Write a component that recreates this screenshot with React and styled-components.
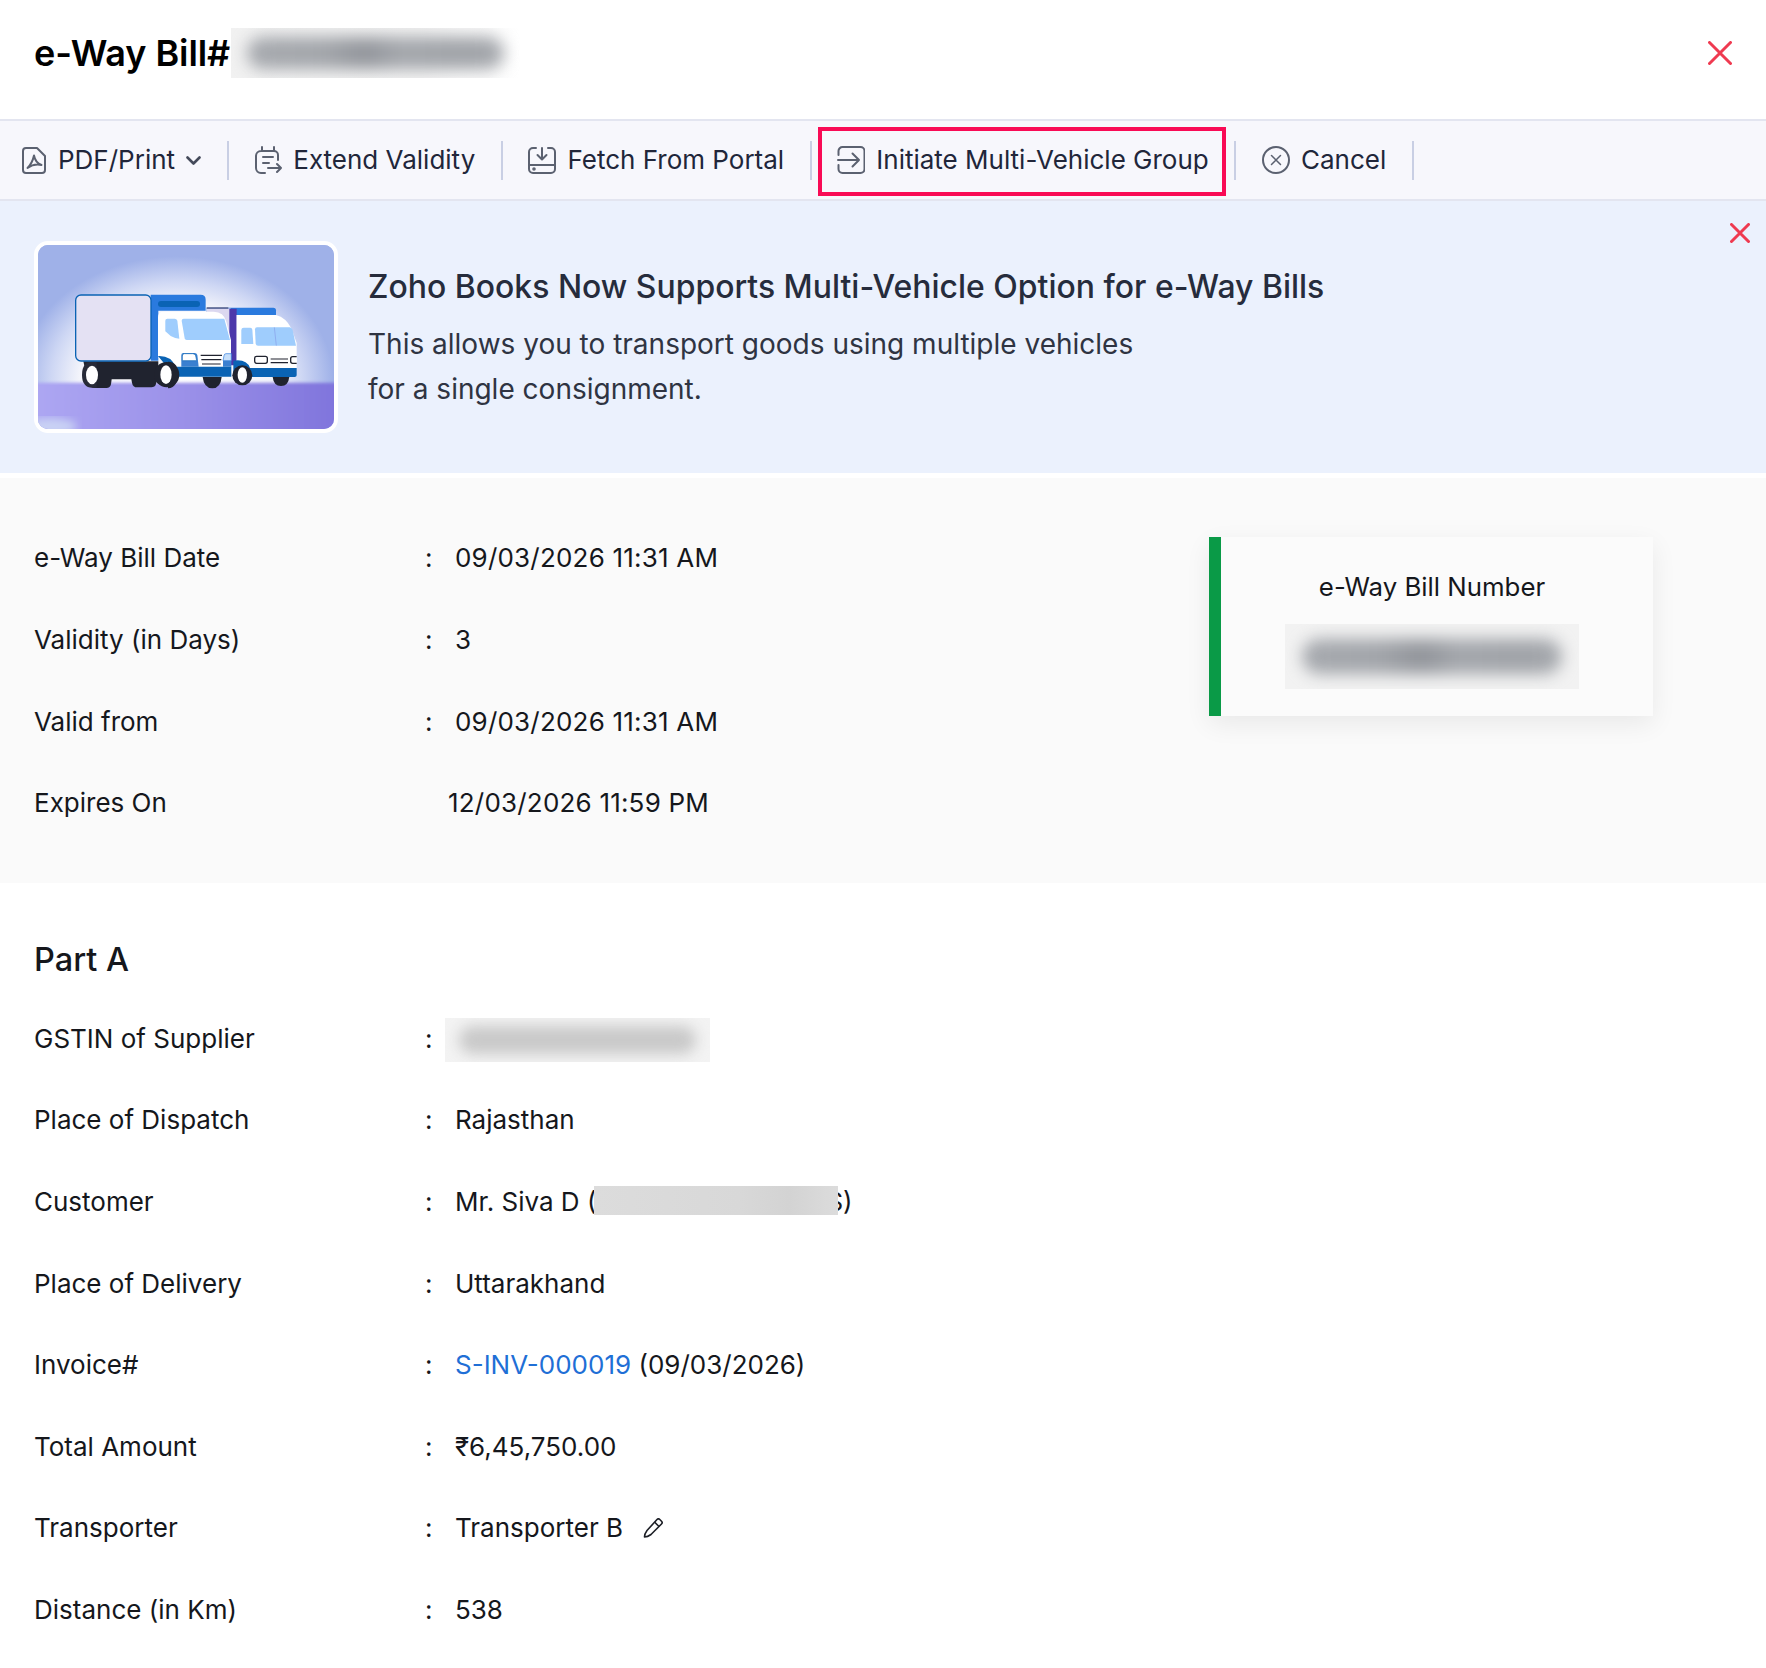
import React from "react";
import styled, { createGlobalStyle } from "styled-components";

const Global = createGlobalStyle`
  html, body { margin: 0; padding: 0; background: #fff; }
  body { font-family: Inter, "Liberation Sans", sans-serif; color: #15171c; }
  * { box-sizing: border-box; }
`;

const Page = styled.div`
  width: 1766px;
  height: 1668px;
  overflow: hidden;
  background: #fff;
`;

const Header = styled.header`
  height: 119px;
  display: flex;
  align-items: center;
  padding: 0 34px 13px;
`;
const Title = styled.h1`
  margin: 0;
  font-size: 36px;
  font-weight: 600;
  color: #000;
  letter-spacing: -0.08px;
`;

const Redaction = styled.span`
  display: inline-flex;
  align-items: center;
  justify-content: center;
  width: ${(p) => p.$w}px;
  height: ${(p) => p.$h}px;
  margin-top: ${(p) => p.$mt || 0}px;
  margin-left: ${(p) => p.$ml || 0}px;
  overflow: hidden;
  background: ${(p) => p.$bg || "#f5f5f5"};
  flex: none;
  &::before {
    content: "";
    width: calc(100% - ${(p) => p.$ix * 2}px);
    height: calc(100% - ${(p) => p.$iy * 2}px);
    border-radius: 18px;
    background: ${(p) => p.$blob};
    filter: blur(${(p) => p.$blur}px);
  }
`;

const CloseBtn = styled.button`
  border: 0;
  padding: 0;
  background: none;
  display: flex;
  margin-left: auto;
  margin-right: ${(p) => p.$mr}px;
  margin-top: ${(p) => p.$mt || 0}px;
`;

const Toolbar = styled.nav`
  height: 82px;
  background: #f7f7fc;
  border-top: 2px solid #e3e5f0;
  border-bottom: 2px solid #e3e5f0;
  display: flex;
  align-items: center;
  padding-left: 22px;
`;
const ToolItem = styled.div`
  position: relative;
  display: flex;
  align-items: center;
  height: 39px;
  gap: 11px;
  padding: 0 25.6px 0 ${(p) => (p.$first ? 0 : 25.6)}px;
  border-right: 2px solid #c9cfe4;
  font-size: 26px;
  line-height: 36px;
  color: #21263a;
  white-space: nowrap;
`;
const ToolLabel = styled.span`
  margin-left: ${(p) => (p.$pdf ? 1 : 0)}px;
`;
const Highlight = styled.span`
  position: absolute;
  left: 6px;
  right: 8px;
  top: -14px;
  bottom: -16px;
  border: 4px solid #f90a55;
`;

const Banner = styled.section`
  height: 272px;
  background: #ebf1fd;
  display: flex;
  align-items: flex-start;
  padding: 40px 0 0 34px;
`;
const Art = styled.div`
  width: 304px;
  height: 192px;
  flex: none;
  border: 4px solid #fff;
  border-radius: 14px;
  overflow: hidden;
  display: flex;
`;
const BannerText = styled.div`
  margin-left: 30px;
  padding-top: 25px;
`;
const BannerTitle = styled.h2`
  margin: 0 0 14px;
  font-size: 31.95px;
  line-height: 42px;
  font-weight: 500;
  color: #262c3c;
`;
const BannerBody = styled.p`
  margin: 0;
  font-size: 28px;
  line-height: 45px;
  color: #2f3442;
`;

const Details = styled.section`
  margin-top: 5px;
  height: 405px;
  background: #fafafa;
  padding: 39px 113px 0 34px;
  display: flex;
  justify-content: space-between;
  align-items: flex-start;
`;
const Rows = styled.div`
  display: flex;
  flex-direction: column;
`;
const Row = styled.div`
  display: flex;
  align-items: center;
  height: 81.65px;
  font-size: 26px;
  color: #15171c;
`;
const Label = styled.div`
  width: 391px;
  flex: none;
`;
const Colon = styled.div`
  width: 30px;
  flex: none;
`;
const Value = styled.div`
  display: flex;
  align-items: center;
  white-space: pre;
  letter-spacing: ${(p) => (p.$date ? "0.2px" : "0")};
`;
const ExpiryValue = styled(Value)`
  margin-left: 23px;
`;

const NumberCard = styled.aside`
  margin-top: 20px;
  width: 444px;
  height: 179px;
  background: #fbfbfb;
  border-left: 12px solid #0a9a47;
  box-shadow: 0 8px 24px rgba(0, 0, 0, 0.07);
  display: flex;
  flex-direction: column;
  align-items: center;
  padding: 33px 10px 0 0;
`;
const CardLabel = styled.div`
  font-size: 25.8px;
  line-height: 34px;
  color: #15171c;
  margin-bottom: 20px;
`;

const PartA = styled.section`
  padding: 50.3px 34px 0;
`;
const PartTitle = styled.h3`
  margin: 0 0 10px;
  font-size: 32.5px;
  line-height: 54px;
  font-weight: 500;
  color: #15171c;
`;
const InvoiceLink = styled.a`
  color: #1f6fd6;
  text-decoration: none;
`;
const InlineRedact = styled.span`
  position: relative;
  display: inline-block;
  width: 244px;
  height: 29px;
  background: linear-gradient(90deg, #dcdcdc, #d8d8d8 60%, #d3d3d3 80%, #dcdcdc);
  margin-left: -2px;
  margin-top: -2px;
`;
const TrailingText = styled.span`
  margin-left: -12px;
`;
const PencilIcon = styled.svg`
  margin-left: 20px;
`;

const stroke = { fill: "none", stroke: "#5b6170", strokeWidth: 2, strokeLinecap: "round", strokeLinejoin: "round" };

const Pdf = () => (
  <svg width="24" height="27" viewBox="0 0 24 27" {...stroke}>
    <path d="M4 1h11l8 8v14a3 3 0 0 1-3 3H4a3 3 0 0 1-3-3V4a3 3 0 0 1 3-3z" />
    <path d="M12 8.500c.8 4.500 3.500 8 7.500 9.500-4.500-1-9.500-.3-14 3 3.500-3.500 5.500-8 6.500-12.500z" />
  </svg>
);
const Extend = () => (
  <svg width="28" height="28" viewBox="0 0 28 28" {...stroke}>
    <path d="M8 1v4M20 1v4M24 14V9a4 4 0 0 0-4-4H7a5 5 0 0 0-5 5v12a5 5 0 0 0 5 5h4" />
    <path d="M9 11h10M9 17h6M14 22h13M23 18l4 4-4 4" />
  </svg>
);
const Fetch = () => (
  <svg width="28" height="28" viewBox="0 0 28 28" {...stroke}>
    <path d="M8 2H5a4 4 0 0 0-4 4v17a4 4 0 0 0 4 4h18a4 4 0 0 0 4-4V6a4 4 0 0 0-4-4h-3" />
    <path d="M14 2v11M9.500 9l4.500 4.500L18.500 9M1 19h26" />
    <circle cx="6" cy="23" r=".8" />
  </svg>
);
const Multi = () => (
  <svg width="28" height="28" viewBox="0 0 28 28" {...stroke}>
    <path d="M1.500 9V5a4 4 0 0 1 4-4h18a4 4 0 0 1 4 4v18a4 4 0 0 1-4 4h-18a4 4 0 0 1-4-4v-4" />
    <path d="M1 14h21M15.500 7.500 22 14l-6.500 6.500" />
  </svg>
);
const CancelIcon = () => (
  <svg width="28" height="28" viewBox="0 0 28 28" {...stroke}>
    <circle cx="14" cy="14" r="13" />
    <path d="m9.500 9.500 9 9M18.500 9.500l-9 9" strokeWidth="1.500" />
  </svg>
);
const X = ({ size, sw }) => (
  <svg width={size} height={size} viewBox={`0 0 ${size} ${size}`} fill="none" stroke="#ef3a50" strokeWidth={sw} strokeLinecap="round">
    <path d={`M1.500 1.500 ${size - 1.5} ${size - 1.5}M${size - 1.5} 1.500 1.500 ${size - 1.5}`} />
  </svg>
);

const TruckArt = () => (
  <svg width="296" height="184" viewBox="54 45 888 552" preserveAspectRatio="none">
    <defs>
      <radialGradient id="glow" gradientUnits="userSpaceOnUse" cx="470" cy="450" r="470" gradientTransform="translate(0 95) scale(1 .79)">
        <stop offset="0" stopColor="#fff" />
        <stop offset=".62" stopColor="#f3f4fb" />
        <stop offset=".8" stopColor="#ced7f4" />
        <stop offset="1" stopColor="#9fb1e8" />
      </radialGradient>
      <linearGradient id="floor" x1="0" x2="1" y1="0" y2="0">
        <stop offset="0" stopColor="#ada7f3" />
        <stop offset=".5" stopColor="#9a90e8" />
        <stop offset="1" stopColor="#7f74dc" />
      </linearGradient>
      <filter id="soft"><feGaussianBlur stdDeviation="12" /></filter>
      <filter id="soft2"><feGaussianBlur stdDeviation="4" /></filter>
    </defs>
    <rect x="54" y="45" width="888" height="552" fill="#9fb1e8" />
    <rect x="54" y="45" width="888" height="420" fill="url(#glow)" />
    <path d="M40 458h920v150H40z" fill="url(#floor)" filter="url(#soft2)" />
    <ellipse cx="90" cy="590" rx="80" ry="26" fill="#c9d2f4" filter="url(#soft)" />

    <path d="M560 233h200q8 0 8 8v14H560z" fill="#2a7ade" />
    <rect x="560" y="235" width="72" height="150" fill="#dcd8f0" />
    <path d="M560 234h65" stroke="#2a2a55" strokeWidth="3" />
    <path d="M628 236h22v170h-22z" fill="#4c38aa" />
    <path d="M650 255h118q30 8 46 40l16 44v76H650z" fill="#fff" />
    <path d="M664 300q0-7 7-7h20q5 0 6 6l3 43h-36z" fill="#9fcdfd" />
    <path d="M705 298q0-6 6-6h98q6 0 9 8l10 47H714q-6 0-7-6z" fill="#9fcdfd" />
    <path d="M763 292l6 55" stroke="#7f8fe0" strokeWidth="1.500" />
    <rect x="704" y="379" width="38" height="21" rx="6" fill="#fff" stroke="#20232f" strokeWidth="4" />
    <path d="M752 387h52M752 398h52" stroke="#20232f" strokeWidth="3.500" />
    <path d="M830 380h-12a6 6 0 0 0-6 6v8a6 6 0 0 0 6 6h12" fill="#fff" stroke="#20232f" strokeWidth="4" />
    <path d="M758 440h50q-3 28-25 28t-25-28z" fill="#20232f" />
    <path d="M640 392q40-6 50 22h140v22q0 5-6 5H640z" fill="#0a63b4" />
    <circle cx="667" cy="436" r="30" fill="#20232f" />
    <ellipse cx="667" cy="435" rx="14" ry="23" fill="#fff" />

    <path d="M392 194h150q15 0 15 15v33H415v150h-23z" fill="#2a7ade" />
    <rect x="414" y="213" width="126" height="18" rx="9" fill="#0a63b4" />
    <path d="M414 262q0-17 17-17h150q30 0 38 30l14 55v85H465q-10-35-51-37z" fill="#fff" />
    <path d="M436 272q0-6 6-6h22q6 0 8 6l6 54q-12 0-26-8l-16-14z" fill="#9fcdfd" />
    <path d="M485 272q0-6 6-6h122l17 64H500q-5 0-6-5z" fill="#9fcdfd" />
    <path d="M548 441h57q-3 34-28 34t-29-34z" fill="#20232f" />
    <path d="M484 375q0-6 6-6h34q6 0 8 6l4 35h-52z" fill="#3a80d0" />
    <path d="M487 378q0-7 6-7h25q7 0 9 6l3 15h-43z" fill="#fff" stroke="#0a63b4" strokeWidth="2" />
    <path d="M542 376h64M544 389h60M546 402h56" stroke="#20232f" strokeWidth="3.500" />
    <path d="M634 371h-16q-5 0-6 6l-3 15h25z" fill="#c7dffa" stroke="#2a7ade" strokeWidth="2" />
    <path d="M609 392h25v18h-25z" fill="#3a80d0" />
    <path d="M414 378q40-2 52 32h168v30H474q-20 0-30-26z" fill="#0a63b4" />

    <path d="M190 394h225v38l-7 30q-3 10-14 10h-42q-14 0-16-14l-2-10h-59l-2 15q-2 11-14 11h-34q-15 0-20-15z" fill="#20232f" />
    <path d="M186 435c0-28 12-40 30-40h14v78h-14c-18 0-30-12-30-38z" fill="#272a38" />
    <ellipse cx="216" cy="435" rx="18" ry="28" fill="#fff" />
    <circle cx="440" cy="434" r="38" fill="#20232f" />
    <path d="M444 395c24 0 30 18 30 38s-8 42-30 42z" fill="#20232f" />
    <ellipse cx="438" cy="434" rx="17" ry="28" fill="#fff" />
    <rect x="167" y="195" width="226" height="198" rx="16" fill="#e4e1f3" stroke="#0a63b4" strokeWidth="4" />
  </svg>
);

const row = (label, value, date) => (
  <Row key={label}>
    <Label>{label}</Label>
    <Colon>:</Colon>
    <Value $date={date}>{value}</Value>
  </Row>
);

const titleBlob = "linear-gradient(90deg,#a6a9ae,#a2a5aa 30%,#92959b 46%,#a4a7ac 60%,#a0a3a8 85%,#a6a9ae)";

export default function App() {
  return (
    <Page>
      <Global />
      <Header>
        <Title>e-Way Bill#</Title>
        <Redaction $w={289} $h={50} $ix={16} $iy={9} $blur={8} $ml={1} $blob={titleBlob} $bg="linear-gradient(90deg,#f1f1f1,#f3f3f3 65%,#fff)" />
        <CloseBtn $mr={0}>
          <X size={24} sw={3} />
        </CloseBtn>
      </Header>

      <Toolbar>
        <ToolItem $first>
          <Pdf />
          <ToolLabel $pdf>PDF/Print</ToolLabel>
          <svg width="15" height="9" viewBox="0 0 15 9" fill="none" stroke="#444a5a" strokeWidth="2.600" strokeLinecap="round" strokeLinejoin="round">
            <path d="m1.500 1.500 6 6 6-6" />
          </svg>
        </ToolItem>
        <ToolItem>
          <Extend />
          <ToolLabel>Extend Validity</ToolLabel>
        </ToolItem>
        <ToolItem>
          <Fetch />
          <ToolLabel>Fetch From Portal</ToolLabel>
        </ToolItem>
        <ToolItem>
          <Multi />
          <ToolLabel>Initiate Multi-Vehicle Group</ToolLabel>
          <Highlight />
        </ToolItem>
        <ToolItem>
          <CancelIcon />
          <ToolLabel>Cancel</ToolLabel>
        </ToolItem>
      </Toolbar>

      <Banner>
        <Art>
          <TruckArt />
        </Art>
        <BannerText>
          <BannerTitle>Zoho Books Now Supports Multi-Vehicle Option for e-Way Bills</BannerTitle>
          <BannerBody>
            This allows you to transport goods using multiple vehicles
            <br />
            for a single consignment.
          </BannerBody>
        </BannerText>
        <CloseBtn $mr={16} $mt={-18}>
          <X size={20} sw={3} />
        </CloseBtn>
      </Banner>

      <Details>
        <Rows>
          {row("e-Way Bill Date", "09/03/2026 11:31 AM", true)}
          {row("Validity (in Days)", "3")}
          {row("Valid from", "09/03/2026 11:31 AM", true)}
          <Row>
            <Label>Expires On</Label>
            <ExpiryValue $date>12/03/2026 11:59 PM</ExpiryValue>
          </Row>
        </Rows>
        <NumberCard>
          <CardLabel>e-Way Bill Number</CardLabel>
          <Redaction $w={294} $h={65} $ix={17} $iy={15} $blur={8} $blob={titleBlob} $bg="#f2f2f2" />
        </NumberCard>
      </Details>

      <PartA>
        <PartTitle>Part A</PartTitle>
        <Rows>
          <Row>
            <Label>GSTIN of Supplier</Label>
            <Colon>:</Colon>
            <Redaction $w={265} $h={44} $ix={14} $iy={8} $blur={7} $ml={-10} $mt={4} $blob="#c9c9c9" $bg="#f3f3f3" />
          </Row>
          {row("Place of Dispatch", "Rajasthan")}
          <Row>
            <Label>Customer</Label>
            <Colon>:</Colon>
            <Value>
              Mr. Siva D (<InlineRedact />
              <TrailingText>S)</TrailingText>
            </Value>
          </Row>
          {row("Place of Delivery", "Uttarakhand")}
          {row(
            "Invoice#",
            <>
              <InvoiceLink>S-INV-000019</InvoiceLink> (09/03/2026)
            </>
          )}
          {row("Total Amount", "₹6,45,750.00")}
          <Row>
            <Label>Transporter</Label>
            <Colon>:</Colon>
            <Value>
              Transporter B
              <PencilIcon width="20" height="20" viewBox="0 0 20 20" fill="none" stroke="#1d1f26" strokeWidth="1.600" strokeLinejoin="round">
                <path d="M14 1.500a2 2 0 0 1 2.800 0l1.700 1.700a2 2 0 0 1 0 2.800L8 16.500c-2 1.500-4 2.500-6.500 2.500 0-2.500 1-4.500 2.500-6.500z" />
                <path d="m11.500 4 4.500 4.500" />
              </PencilIcon>
            </Value>
          </Row>
          {row("Distance (in Km)", "538")}
        </Rows>
      </PartA>
    </Page>
  );
}
